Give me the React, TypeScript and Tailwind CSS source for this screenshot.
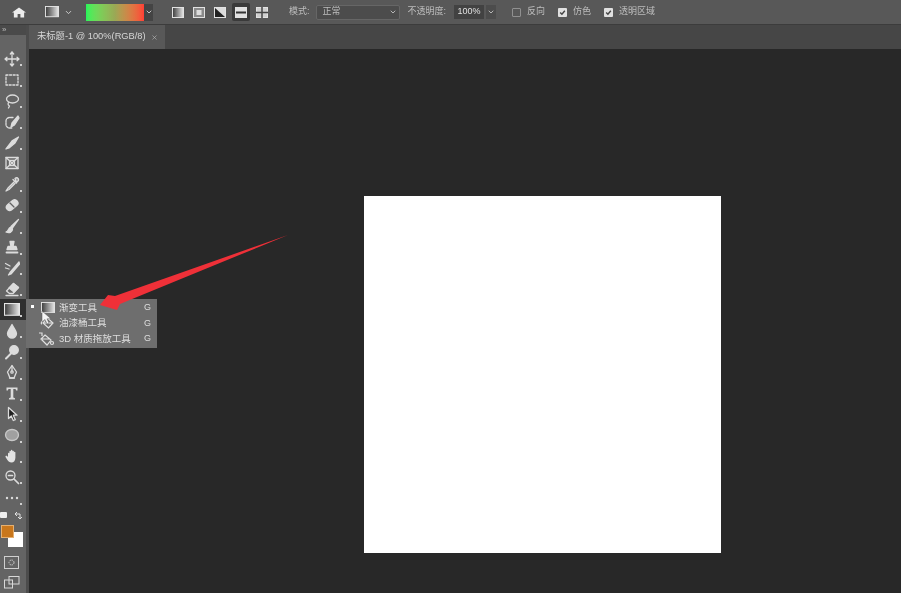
import type { ReactNode } from 'react'
import { ChevronDown, X } from 'lucide-react'

const FONT = "font-['Liberation_Sans','Noto_Sans_CJK_SC',sans-serif]"

const Glyph = ({ children }: { children: ReactNode }) => (
  <svg width="16" height="16" viewBox="0 0 16 16" fill="none" stroke="#dcdcdc" strokeWidth="1.3" strokeLinecap="round" strokeLinejoin="round">
    {children}
  </svg>
)

const gradientFill = (
  <defs>
    <linearGradient id="grad" x1="0" x2="1" y1="0" y2="0">
      <stop offset="0" stopColor="#3a3a3a" />
      <stop offset="1" stopColor="#e8e8e8" />
    </linearGradient>
  </defs>
)

const toolIcons: ReactNode[] = [
  <path d="M8 1v14M1 8h14M8 1 6.3 3M8 1l1.7 2M8 15l-1.7-2M8 15l1.7-2M1 8l2-1.7M1 8l2 1.7M15 8l-2-1.7M15 8l-2 1.7" />,
  <rect x="2" y="3" width="12" height="10" strokeDasharray="2 1.6" />,
  <><ellipse cx="8.5" cy="6" rx="6" ry="4" /><path d="M4.5 9.5c-1 2 0 3 1 3.5l-1 2" /></>,
  <><path d="M9 3.5H5.5A3.5 3.5 0 0 0 2 7v3.5A3.5 3.5 0 0 0 5.5 14H8" strokeDasharray="2.5 1" /><path d="M14 2 8 9l-1 4 3.5-2L15 4z" fill="#dcdcdc" /></>,
  <path d="m14.5 2-6 3.5L2 14l3-1 6-5z" fill="#dcdcdc" />,
  <><rect x="2" y="2.5" width="12" height="11" /><path d="m2 2.5 12 11M14 2.5l-12 11" /><rect x="5.5" y="5.5" width="5" height="5" /></>,
  <path d="m10 6-6 6-2 3 3-1.500 6-6M9 3.500l3.500 3.500M11 2.500c1-1 2.500-1 3 0 .8.800.5 2-.5 3l-1 1z" fill="#dcdcdc" fillOpacity="0.45" />,
  <><rect x="1.500" y="5" width="13" height="6.500" rx="3.200" transform="rotate(-40 8 8)" fill="#dcdcdc" /><path d="m6 6 4 4" stroke="#646464" /></>,
  <path d="M14.500 1.500 7 8.500l1.500 1.500zM6.500 9.500C4 10 5 13 2 14c3 1.500 6.500.500 6.500-3z" fill="#dcdcdc" />,
  <><path d="M6 2.500h4L9 7.500h3l1 3H3l1-3h3z" fill="#dcdcdc" /><path d="M2.500 13.500h11" strokeWidth="1.800" /></>,
  <><path d="M1.500 3.500 6 6M1.500 8 5 9M15 2 6 12.500 4.500 15l2.500-1L15.500 4z" fill="#dcdcdc" /></>,
  <><path d="m9.500 2.500 5 4-5.500 6H5.500L2.500 10z" /><path d="m9.500 2.500 5 4L10 11 5 7z" fill="#dcdcdc" /><path d="M2 14.500h12" /></>,
  null,
  <path d="M8 1.500C6.500 5 3.500 7.500 3.500 10.500a4.500 4.500 0 0 0 9 0C12.500 7.500 9.500 5 8 1.500z" fill="#dcdcdc" />,
  <><circle cx="10" cy="6" r="4.300" fill="#dcdcdc" /><path d="M7 9.500 2 14.500" strokeWidth="2" /></>,
  <><path d="M8 1.500 12.500 8 10 14H6L3.500 8z" /><circle cx="8" cy="8" r="1.200" /><path d="M8 2v5M5.500 14h5" /></>,
  <path d="M2.500 2.500h11v3h-1.300l-.7-1.500H9.300v8.500l1.700.7v1.300H5v-1.300l1.700-.7V4H4.500l-.7 1.500H2.500z" fill="#dcdcdc" stroke="none" />,
  <path d="M4.500 1.500v11l2.800-2.600 2 4.600 2-.8-2-4.500h3.700z" fill="#1f1f1f" stroke="#dcdcdc" />,
  <ellipse cx="8" cy="8" rx="6.500" ry="5.500" fill="#a0a0a0" stroke="#c8c8c8" />,
  <path d="M4 9V5.500c0-1 1.400-1 1.400 0V3.500c0-1 1.500-1 1.500 0V2.500c0-1 1.500-1 1.500 0v1c0-1 1.500-1 1.500 0v1c0-1 1.500-1 1.500 0v5c0 3-1.500 5-4 5-2 0-3-1-4-2.500L1.500 9c-.5-1 1-1.800 1.600-1z" fill="#e4e4e4" stroke="none" />,
  <><circle cx="6.500" cy="6.500" r="4.500" /><path d="m10 10 4.500 4.500M4.500 6.500h4" strokeWidth="1.700" /></>,
  <><circle cx="3" cy="8" r="1.200" fill="#dcdcdc" stroke="none" /><circle cx="8" cy="8" r="1.200" fill="#dcdcdc" stroke="none" /><circle cx="13" cy="8" r="1.200" fill="#dcdcdc" stroke="none" /></>,
]

const GradientTool = ({ size = 16 }: { size?: number }) => (
  <svg width={size} height={size * 0.8} viewBox="0 0 15 12">
    {gradientFill}
    <rect x="0.500" y="0.500" width="14" height="11" fill="url(#grad)" stroke="#e6e6e6" />
  </svg>
)

const ToolButton = ({ icon, index }: { icon: ReactNode; index: number }) => (
  <div className={`relative flex h-[20.9px] items-center justify-center pr-[3px] ${index === 12 ? 'bg-[#2f2f2f]' : ''}`}>
    {index === 12 ? <GradientTool /> : <Glyph>{icon}</Glyph>}
    {index !== 5 && <span className="absolute right-[4px] bottom-[3px] h-[2px] w-[2px] bg-[#cfcfcf]" />}
  </div>
)

const Toolbar = () => (
  <aside className="flex w-[29px] shrink-0 flex-col border-r-[3px] border-[#4c4c4c] bg-[#646464] blur-[0.6px]">
    <div className="flex h-[10px] items-center bg-[#4a4a4a] pl-[2px] text-[8px] leading-none text-[#bbb]">»</div>
    <div className="h-[13.600px]" />
    {toolIcons.map((icon, i) => (
      <ToolButton key={i} icon={icon} index={i} />
    ))}
    {/* default colors + swap */}
    <div className="flex h-[14px] items-center justify-between pr-[3px]">
      <span className="h-[6px] w-[7px] rounded-[1px] bg-[#eee]" />
      <svg width="9" height="9" viewBox="0 0 9 9" fill="none" stroke="#e0e0e0" strokeWidth="1"><path d="M1 3h5v5M1 3l2-2M1 3l2 2M6 8 4 6M6 8l2-2" /></svg>
    </div>
    {/* foreground / background swatches */}
    <div className="relative h-[30px]">
      <span className="absolute top-[10px] left-[8px] h-[15px] w-[15px] bg-white" />
      <span className="absolute top-[3px] left-[1px] h-[13px] w-[13px] border border-[#e6b070] bg-[#c9771c]" />
    </div>
    <div className="flex h-[20px] items-center justify-center pr-[3px]">
      <svg width="15" height="13" viewBox="0 0 15 13" fill="none" stroke="#cfcfcf"><rect x="0.500" y="0.500" width="14" height="12" /><circle cx="7.500" cy="6.500" r="2.500" strokeDasharray="1.500 0.800" /></svg>
    </div>
    <div className="flex h-[21px] items-center justify-center pr-[3px]">
      <svg width="16" height="13" viewBox="0 0 16 13" fill="none" stroke="#d8d8d8"><rect x="5" y="0.500" width="10" height="7.500" /><rect x="0.500" y="4" width="8" height="8" /></svg>
    </div>
  </aside>
)

const AlignIcon = ({ children, active, fill = '#8a8a8a' }: { children?: ReactNode; active?: boolean; fill?: string }) => (
  <span className={`flex h-[18px] w-[18px] items-center justify-center rounded-[2px] ${active ? 'bg-[#3a3a3a]' : ''}`}>
    <svg width="12" height="11" viewBox="0 0 12 11" fill="none" stroke="#e2e2e2">
      <rect x="0.500" y="0.500" width="11" height="10" fill={fill} />
      {children}
    </svg>
  </span>
)

const Check = ({ checked, label }: { checked?: boolean; label: string }) => (
  <label className="flex items-center gap-[6px]">
    <span className={`flex h-[9px] w-[9px] items-center justify-center rounded-[1px] ${checked ? 'bg-[#e0e0e0]' : 'border border-[#909090]'}`}>
      {checked && (
        <svg width="7" height="7" viewBox="0 0 6 6" fill="none" stroke="#444" strokeWidth="1.200"><path d="m1 3 1.500 1.500L5 1.500" /></svg>
      )}
    </span>
    <span>{label}</span>
  </label>
)

const OptionsBar = () => (
  <header className="flex h-[25px] shrink-0 items-center border-b border-[#3c3c3c] bg-[#585858] text-[9px] text-[#bdbdbd] blur-[0.5px]">
    <svg className="ml-[12px]" width="14" height="11" viewBox="0 0 15 14" preserveAspectRatio="none" fill="#ececec">
      <path d="M7.500 0.500 15 7h-2v6.500H9V9H6v4.500H2V7H0z" />
    </svg>
    <span className="ml-[19px]"><GradientTool size={14} /></span>
    <ChevronDown className="ml-[5px] h-[9px] w-[9px] text-[#d0d0d0]" strokeWidth={2.500} />
    <div className="ml-[13px] h-[17px] w-[58px] bg-gradient-to-r from-[#22f55a] via-[#9aa855] to-[#ff3e36]" />
    <span className="flex h-[17px] w-[9px] items-center justify-center bg-[#444]">
      <ChevronDown className="h-[8px] w-[8px] text-[#ddd]" strokeWidth={2.500} />
    </span>
    <span className="ml-[16px] flex items-center gap-[3px]">
      <AlignIcon fill="url(#grad)" />
      <AlignIcon><rect x="3.500" y="3" width="5" height="5" fill="#ddd" stroke="none" /></AlignIcon>
      <AlignIcon fill="#dcdcdc"><path d="M1 1 11 10H1z" fill="#222" stroke="none" /></AlignIcon>
      <AlignIcon active fill="#e0e0e0"><path d="M1 5.500h10" stroke="#333" strokeWidth="2" /></AlignIcon>
      <AlignIcon fill="#d0d0d0"><path d="M6 0v11M0 5.500h12" stroke="#444" strokeWidth="1.500" /></AlignIcon>
    </span>
    <span className="ml-[18px]">模式:</span>
    <span className="ml-[6px] flex h-[15px] w-[84px] items-center justify-between rounded-[2px] border border-[#666] bg-[#4c4c4c] pr-[2px] pl-[6px]">
      正常
      <ChevronDown className="h-[8px] w-[8px] text-[#ccc]" strokeWidth={2.500} />
    </span>
    <span className="ml-[8px]">不透明度:</span>
    <span className="ml-[8px] flex h-[14px] w-[30px] items-center justify-center bg-[#424242] text-[#e0e0e0]">100%</span>
    <span className="ml-[2px] flex h-[14px] w-[10px] items-center justify-center bg-[#4c4c4c]">
      <ChevronDown className="h-[8px] w-[8px] text-[#ccc]" strokeWidth={2.500} />
    </span>
    <span className="ml-[16px] flex items-center gap-[13px]">
      <Check label="反向" />
      <Check checked label="仿色" />
      <Check checked label="透明区域" />
    </span>
  </header>
)

const TabBar = () => (
  <div className="flex h-[24px] shrink-0 bg-[#464646]">
    <div className="flex w-[136px] items-center justify-between bg-[#585858] pr-[7px] pl-[8px] text-[9.300px] text-[#d6d6d6] blur-[0.5px]">
      <span>未标题-1 @ 100%(RGB/8)</span>
      <X className="h-[7px] w-[7px] text-[#bbb]" strokeWidth={2} />
    </div>
  </div>
)

const FlyoutRow = ({ icon, label }: { icon: ReactNode; label: string }) => (
  <div className="flex h-[15.500px] items-center">
    <span className="flex w-[30px] justify-end pr-[1px]">{icon}</span>
    <span className="ml-[3px] flex-1">{label}</span>
    <span className="pr-[6px] text-[9px]">G</span>
  </div>
)

const Flyout = () => (
  <div className="absolute top-[299px] left-[26px] w-[131px] bg-[#6e6e6e] pt-[1px] pb-[1px] text-[9.500px] text-[#dedede] blur-[0.5px]">
    <span className="absolute top-[6px] left-[5px] h-[3px] w-[3px] bg-white" />
    <FlyoutRow icon={<GradientTool size={14} />} label="渐变工具" />
    <FlyoutRow
      icon={
        <svg width="15" height="14" viewBox="0 0 15 14" fill="none" stroke="#e0e0e0" strokeWidth="1.200">
          <path d="m7.500 2 5.500 5-4.500 5L3 7z" /><path d="M3 7h9" /><path d="M2 5c-1 2-1 3 0 3" />
        </svg>
      }
      label="油漆桶工具"
    />
    <FlyoutRow
      icon={
        <svg width="17" height="14" viewBox="0 0 17 14" fill="none" stroke="#e0e0e0" strokeWidth="1.200">
          <path d="M1 1h3v3M7 3l6 5-4 5-6-6zM4 7h8" /><circle cx="14" cy="11" r="1.500" />
        </svg>
      }
      label="3D 材质拖放工具"
    />
  </div>
)

// cursor plus red annotation arrow, sitting over the flyout
const Annotations = () => (
  <>
    <svg className="pointer-events-none absolute top-[310px] left-[41px]" width="12" height="16" viewBox="0 0 12 16">
      <path d="M1 1v11l3-2.500 2 4.500 2-1-2-4.200h4z" fill="#f4f4f4" stroke="#555" strokeWidth="0.500" />
    </svg>
    <svg className="pointer-events-none absolute top-[230px] left-[95px]" width="200" height="82" viewBox="0 0 200 82">
      <path d="M193 5 25 74 22 80 5 75 13 65 20 66z" fill="#ef3038" />
    </svg>
  </>
)

export default function App() {
  return (
    <div className={`relative flex h-[593px] w-[901px] flex-col overflow-hidden bg-[#282828] ${FONT}`}>
      <OptionsBar />
      <div className="flex min-h-0 flex-1">
        <Toolbar />
        <div className="flex min-w-0 flex-1 flex-col">
          <TabBar />
          <main className="flex-1 bg-[#282828] pt-[147px] pl-[335px]">
            <div className="h-[357px] w-[357px] bg-white" />
          </main>
        </div>
      </div>
      <Flyout />
      <Annotations />
    </div>
  )
}
